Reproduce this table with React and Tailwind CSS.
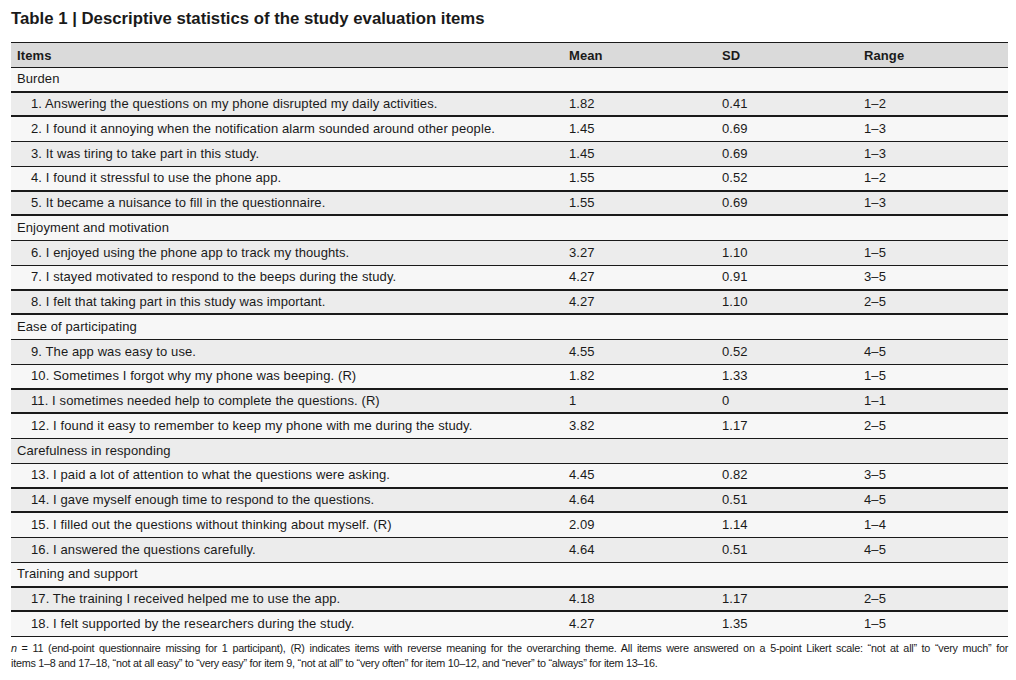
import React from "react";

const groups = [
  {
    title: "Burden",
    items: [
      ["1. Answering the questions on my phone disrupted my daily activities.", "1.82", "0.41", "1–2"],
      ["2. I found it annoying when the notification alarm sounded around other people.", "1.45", "0.69", "1–3"],
      ["3. It was tiring to take part in this study.", "1.45", "0.69", "1–3"],
      ["4. I found it stressful to use the phone app.", "1.55", "0.52", "1–2"],
      ["5. It became a nuisance to fill in the questionnaire.", "1.55", "0.69", "1–3"],
    ],
  },
  {
    title: "Enjoyment and motivation",
    items: [
      ["6. I enjoyed using the phone app to track my thoughts.", "3.27", "1.10", "1–5"],
      ["7. I stayed motivated to respond to the beeps during the study.", "4.27", "0.91", "3–5"],
      ["8. I felt that taking part in this study was important.", "4.27", "1.10", "2–5"],
    ],
  },
  {
    title: "Ease of participating",
    items: [
      ["9. The app was easy to use.", "4.55", "0.52", "4–5"],
      ["10. Sometimes I forgot why my phone was beeping. (R)", "1.82", "1.33", "1–5"],
      ["11. I sometimes needed help to complete the questions. (R)", "1", "0", "1–1"],
      ["12. I found it easy to remember to keep my phone with me during the study.", "3.82", "1.17", "2–5"],
    ],
  },
  {
    title: "Carefulness in responding",
    items: [
      ["13. I paid a lot of attention to what the questions were asking.", "4.45", "0.82", "3–5"],
      ["14. I gave myself enough time to respond to the questions.", "4.64", "0.51", "4–5"],
      ["15. I filled out the questions without thinking about myself. (R)", "2.09", "1.14", "1–4"],
      ["16. I answered the questions carefully.", "4.64", "0.51", "4–5"],
    ],
  },
  {
    title: "Training and support",
    items: [
      ["17. The training I received helped me to use the app.", "4.18", "1.17", "2–5"],
      ["18. I felt supported by the researchers during the study.", "4.27", "1.35", "1–5"],
    ],
  },
];

// flatten groups into rows so the stripes alternate across the whole table
const rows = [];
groups.forEach((g) => {
  rows.push({ kind: "group", label: g.title });
  g.items.forEach((it) => rows.push({ kind: "item", cells: it }));
});

const Row = ({ row, index }) => {
  const bg = index % 2 === 1 ? "bg-[#ececec]" : "bg-[#f7f7f7]";
  // rule weight drifts like the printed 1.5px rule does
  const rule = index % 4 < 2 ? "border-b-2" : "border-b";
  return (
    <div
      className={`grid grid-cols-[552px_153px_142px_1fr] items-center h-[24.75px] pl-[6px] ${rule} border-[#1a1a1a] ${bg}`}
    >
      {row.kind === "group" ? (
        <div>{row.label}</div>
      ) : (
        <>
          <div className="pl-[14px] whitespace-nowrap">{row.cells[0]}</div>
          <div>{row.cells[1]}</div>
          <div>{row.cells[2]}</div>
          <div>{row.cells[3]}</div>
        </>
      )}
    </div>
  );
};

export default function App() {
  return (
    <div
      className="w-[1016px] h-[680px] bg-white text-[#1a1a1a] px-[11px] pt-[8px]"
      style={{ fontFamily: '"Liberation Sans", Arial, sans-serif' }}
    >
      <h1 className="text-[16.75px] font-bold leading-[22px] h-[34px]">
        Table 1 | Descriptive statistics of the study evaluation items
      </h1>

      <div className="w-[997px] border-t border-[#1a1a1a] text-[13px] tracking-[0.1px]">
        <div className="grid grid-cols-[552px_153px_142px_1fr] items-center h-[24.75px] pt-[2px] pl-[6px] border-b border-[#1a1a1a] bg-[#dadada] font-bold">
          <div>Items</div>
          <div>Mean</div>
          <div>SD</div>
          <div>Range</div>
        </div>
        {rows.map((r, i) => (
          <Row key={i} row={r} index={i} />
        ))}
      </div>

      <div className="w-[997px] mt-[4px] text-[10.8px] leading-[15px] tracking-[-0.25px]">
        <div className="text-justify [text-align-last:justify] whitespace-nowrap">
          <i>n</i> = 11 (end-point questionnaire missing for 1 participant), (R) indicates items with reverse meaning
          for the overarching theme. All items were answered on a 5-point Likert scale: “not at all” to “very much” for
        </div>
        <div>
          items 1–8 and 17–18, “not at all easy” to “very easy” for item 9, “not at all” to “very often” for item
          10–12, and “never” to “always” for item 13–16.
        </div>
      </div>
    </div>
  );
}
